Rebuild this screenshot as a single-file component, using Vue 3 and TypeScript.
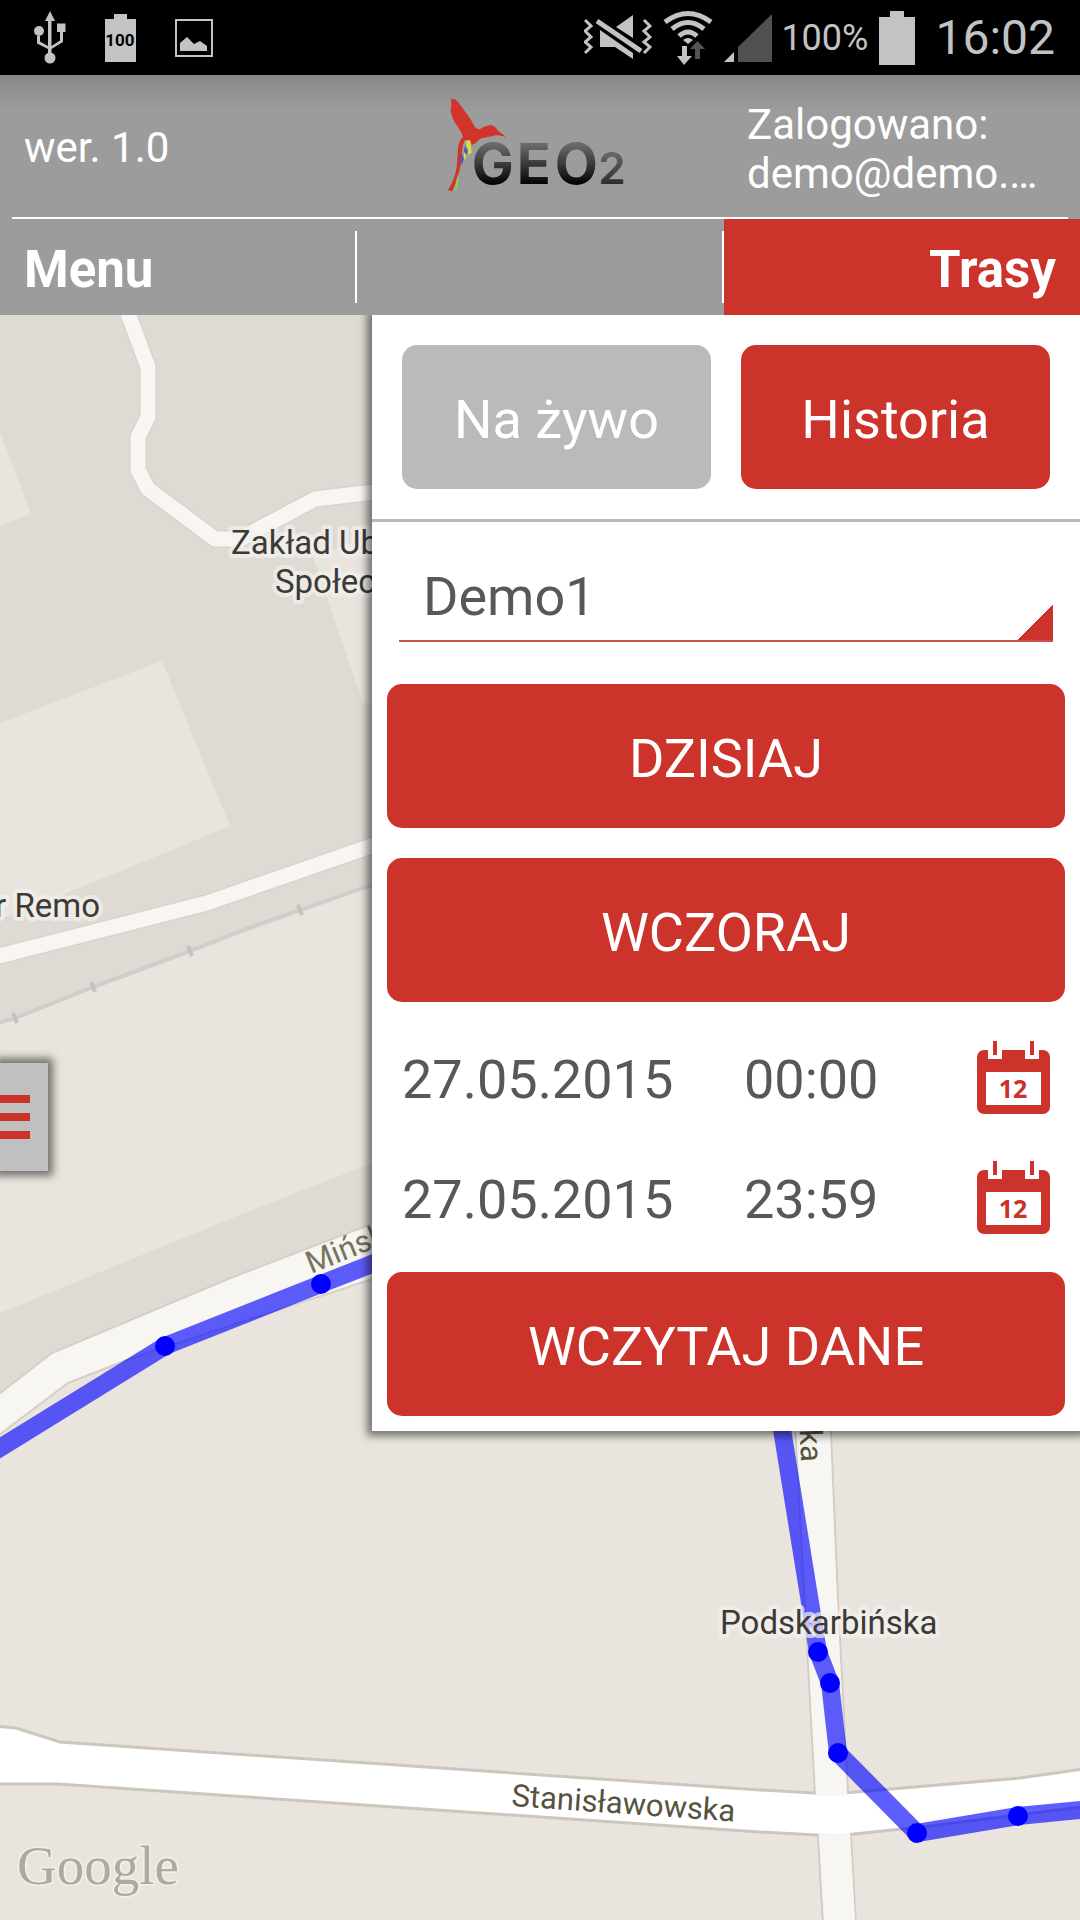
<script setup lang="ts">
import { ref } from 'vue'

interface Point { x: number; y: number }

const vehicle = ref('Demo1')
const ranges = ref([
  { id: 'from', label: 'Od', date: '27.05.2015', time: '00:00' },
  { id: 'to', label: 'Do', date: '27.05.2015', time: '23:59' },
])

const westTrack: Point[] = [{ x: -10, y: 1454 }, { x: 165, y: 1346 }, { x: 321, y: 1284 }, { x: 400, y: 1253 }]
const eastTrack: Point[] = [
  { x: 775, y: 1386 }, { x: 818, y: 1652 }, { x: 830, y: 1683 }, { x: 838, y: 1753 },
  { x: 917, y: 1833 }, { x: 1018, y: 1816 }, { x: 1090, y: 1809 },
]
const stops: Point[] = [...westTrack.slice(1, 3), ...eastTrack.slice(1, 6)]
const railTicks: Point[] = [{ x: 15, y: 1018 }, { x: 93, y: 987 }, { x: 190, y: 951 }, { x: 300, y: 910 }]
const toPoints = (track: Point[]) => track.map((p) => `${p.x},${p.y}`).join(' ')
</script>

<template>
  <div class="screen">
    <div class="status">
      <div class="status-left">
        <svg width="32" height="54" viewBox="34 10 32 54" fill="#c3c3c3" aria-hidden="true">
          <path d="M50 10 L55 20 H51.5 V45 L60 39.500 V31 H57 V22.500 H65.500 V31 H63 V41 L51.500 48 V53 H48 V48 L37 42.500 V35 H40 V40.500 L48 45 V20 H45 Z" />
          <circle cx="39" cy="30" r="5" /><circle cx="50" cy="57" r="5.500" />
        </svg>
        <svg width="31" height="48" viewBox="0 0 31 48" aria-hidden="true">
          <path d="M9 0 H22 V5 H31 V48 H0 V5 H9 Z" fill="#c3c3c3" />
          <text class="batt-text" x="15" y="32" text-anchor="middle">100</text>
        </svg>
        <svg width="38" height="38" viewBox="0 0 38 38" aria-hidden="true">
          <rect x="1" y="1" width="36" height="36" fill="none" stroke="#c3c3c3" stroke-width="2" />
          <path d="M5 32 V24 L12 18 L19 25 L25 22 L32 27 V32 Z" fill="#c3c3c3" />
        </svg>
      </div>
      <div class="status-right">
        <svg width="68" height="50" viewBox="583 12 68 50" aria-hidden="true">
          <path d="M615 26 L632 14 V37 Z M599 29 L632 52 V58 L614 46 H599 Z" fill="#c3c3c3" />
          <path d="M596 20 L640 50" stroke="#000" stroke-width="9" />
          <path d="M596 20 L640 50" stroke="#c3c3c3" stroke-width="5" />
          <path d="M584 19 L590 25 L584 30 L590 36 L584 41 L590 46 L584 52 M643 19 L649 25 L643 30 L649 36 L643 41 L649 46 L643 52" fill="none" stroke="#c3c3c3" stroke-width="3" />
        </svg>
        <svg width="50" height="56" viewBox="661 8 50 56" aria-hidden="true">
          <g fill="none" stroke="#c3c3c3" stroke-width="5">
            <path d="M663 20 Q686 3 709 20" /><path d="M670 27 Q686 14 702 27" /><path d="M677 34 Q686 26 695 34" />
          </g>
          <path d="M681 38 Q686 34 691 38 L686 42 Z M680 44 H685 V54 H690 L682 63 L675 54 H680 Z" fill="#c3c3c3" />
          <path d="M693 57 V47 H688 L695.500 39 L703 47 H698 V57 Z" fill="#555" />
        </svg>
        <svg width="48" height="48" viewBox="0 0 48 48" aria-hidden="true">
          <path d="M0 48 L10 38 V48 Z" fill="#c3c3c3" /><path d="M14 48 V33 L48 0 V48 Z" fill="#505050" />
        </svg>
        <span class="percent">100%</span>
        <svg width="36" height="54" viewBox="0 0 36 54" aria-hidden="true">
          <path d="M11 0 H25 V6 H36 V54 H0 V6 H11 Z" fill="#c3c3c3" />
        </svg>
        <span class="clock">16:02</span>
      </div>
    </div>

    <header class="header">
      <div class="brand">
        <span class="version">wer. 1.0</span>
        <svg class="logo" width="220" height="130" viewBox="0 0 660 390" role="img" aria-label="GEO2">
          <defs>
            <linearGradient id="ink" gradientUnits="userSpaceOnUse" x1="0" y1="190" x2="0" y2="312">
              <stop offset="0" stop-color="#6a6a6a" /><stop offset="0.500" stop-color="#383838" /><stop offset="1" stop-color="#000" />
            </linearGradient>
            <linearGradient id="ink-light" gradientUnits="userSpaceOnUse" x1="0" y1="215" x2="0" y2="312">
              <stop offset="0" stop-color="#686868" /><stop offset="1" stop-color="#2c2c2c" />
            </linearGradient>
          </defs>
          <path d="M63 55 Q72 50 84 63 L108 95 Q124 116 130 130 Q138 147 150 144 Q162 135 182 132 Q197 136 204 149 L228 167 Q210 164 199 162 Q172 170 154 171 L146 178 Q137 190 126 192 Q117 173 104 178 Q94 200 96 232 Q88 275 78 307 L66 331 L54 328 Q75 293 80 258 Q83 218 84 202 Q86 180 99 168 Q94 150 83 137 Q64 112 62 88 Q66 72 63 55 Z" fill="#d0342b" />
          <path d="M108 180 L121 178 L125 215 L114 221 Z M103 216 L109 224 L105 237 L100 231 Z" fill="#d9dd3c" />
          <path d="M104 194 L114 207 L111 221 L102 211 Z M95 218 L102 232 L96 252 L91 240 Z" fill="#4a5bc4" />
          <path d="M84 278 L85 303 L80 326 L72 326 Z" fill="#8fd04e" />
          <g class="wordmark">
            <text x="125 260 374" y="309" fill="url(#ink)">GEO</text>
            <text class="two" x="505" y="310" fill="url(#ink-light)">2</text>
          </g>
        </svg>
        <p class="account">Zalogowano:<br>demo@demo.…</p>
      </div>
      <div class="divider"></div>
      <nav class="tabs">
        <button type="button" class="tab">Menu</button>
        <span class="rule"></span>
        <span></span>
        <span class="rule"></span>
        <button type="button" class="tab active">Trasy</button>
      </nav>
    </header>

    <main class="stage">
      <svg class="map" viewBox="0 315 1080 1605" preserveAspectRatio="xMinYMin slice" aria-label="Mapa">
        <rect x="0" y="315" width="1080" height="1605" fill="#dfdbd4" />
        <g fill="#e9e5de">
          <path d="M0 432 L31 514 L0 525 Z" />
          <path d="M0 723 L162 661 L230 826 L67 893 L0 919 Z" />
          <path d="M313 557 L400 525 V700 L363 703 Z" />
          <path d="M0 1022 L93 989 L190 953 L300 912 L400 876 V1152 L242 1214 L0 1313 Z" />
          <path d="M0 1430 L68 1383 L400 1265 H1080 V1920 H0 Z" />
        </g>
        <g fill="none" stroke-linejoin="round">
          <path d="M123 300 L148 367 V417 L138 437 V470 L148 489 L215 539 H240 L315 499 L400 489 M-5 957 L207 903 L400 836" stroke="#d8d4cc" stroke-width="18" />
          <path d="M123 300 L148 367 V417 L138 437 V470 L148 489 L215 539 H240 L315 499 L400 489 M-5 957 L207 903 L400 836" stroke="#f8f6f2" stroke-width="15" />
          <path d="M-5 1024 L15 1018 L93 987 L190 951 L240 931 L300 910 L400 875" stroke="#d0ceca" stroke-width="4" />
        </g>
        <path v-for="t in railTicks" :key="t.x" :d="`M${t.x - 2} ${t.y - 5} L${t.x + 2} ${t.y + 5}`" stroke="#c4c2be" stroke-width="4" />
        <path d="M-5 1397 L52 1353 L228 1279 L400 1213 V1270 L132 1358 L68 1383 L-5 1438 Z" fill="#f8f6f2" stroke="#d5d0c6" stroke-width="2" />
        <path d="M-5 1726 L16 1728 L60 1742 L760 1790 L832 1794 L1020 1778 L1090 1768 V1806 L930 1826 L835 1836 L760 1832 L58 1784 H-5 Z" fill="#fff" stroke="#ccc6bb" stroke-width="3" />
        <path d="M793 1386 L815 1793 M829 1386 L838 1600 L848 1793 M818 1837 L823 1925 M851 1837 L856 1925" fill="none" stroke="#d2cdc2" stroke-width="2" />
        <path d="M794 1386 H828 L837 1600 L847 1795 L850 1834 L855 1920 H824 L819 1837 L816 1795 Z" fill="#f8f6f2" />
        <path d="M800 1796 L832 1796 L865 1793 V1831 L835 1834 L800 1832 Z" fill="#fff" />

        <g fill="none" stroke="#00f" stroke-width="18" stroke-opacity="0.630">
          <polyline :points="toPoints(westTrack)" />
          <polyline :points="toPoints(eastTrack)" />
        </g>
        <g class="place">
          <text x="231" y="554">Zakład Ub</text>
          <text x="275" y="593">Społec</text>
          <text x="100" y="917" text-anchor="end">r Remo</text>
          <text x="720" y="1634">Podskarbińska</text>
        </g>
        <g class="street">
          <text transform="translate(311 1274) rotate(-22)" fill="#77735f">Mińska</text>
          <text transform="translate(511 1806) rotate(4)">Stanisławowska</text>
          <text transform="translate(801 1462) rotate(88)" text-anchor="end">ka</text>
        </g>
        <circle v-for="s in stops" :key="`${s.x}-${s.y}`" :cx="s.x" :cy="s.y" r="10" fill="#00f" />
        <text class="provider" x="17" y="1884">Google</text>
      </svg>

      <button type="button" class="drawer" aria-label="Otwórz listę"><i></i><i></i><i></i></button>

      <form class="panel" @submit.prevent>
        <div class="modes">
          <button type="button" class="btn muted">Na żywo</button>
          <button type="button" class="btn">Historia</button>
        </div>
        <select v-model="vehicle" class="vehicle" aria-label="Pojazd">
          <option>Demo1</option>
        </select>
        <div class="presets">
          <button type="button" class="btn">DZISIAJ</button>
          <button type="button" class="btn">WCZORAJ</button>
        </div>
        <div class="ranges">
          <div v-for="r in ranges" :key="r.id" class="range">
            <input v-model="r.date" type="text" :aria-label="`${r.label} – data`">
            <input v-model="r.time" type="text" :aria-label="`${r.label} – godzina`">
            <button type="button" class="calendar" :aria-label="`${r.label} – kalendarz`">
              <svg width="73" height="73" viewBox="0 0 73 73">
                <rect y="9" width="73" height="64" rx="7" fill="#cb332b" />
                <path d="M11 8 H25 V18 H11 Z M48 8 H62 V18 H48 Z M9 31 H64 V64 H9 Z" fill="#fff" />
                <path d="M16 0 H20 V14 H16 Z M53 0 H57 V14 H53 Z" fill="#cb332b" />
                <text x="36" y="57" text-anchor="middle">12</text>
              </svg>
            </button>
          </div>
        </div>
        <button type="submit" class="btn">WCZYTAJ DANE</button>
      </form>
    </main>
  </div>
</template>

<style>
body {
  margin: 0;
}
</style>

<style scoped>
.screen {
  display: flex;
  flex-direction: column;
  min-height: 100vh;
  overflow: hidden;
  font-family: Roboto, "Noto Sans", sans-serif;
  color: #fff;
}
button, input, select {
  margin: 0;
  padding: 0;
  border: 0;
  border-radius: 0;
  background: none;
  color: inherit;
  font: inherit;
}
svg {
  display: block;
  flex: none;
}

.status {
  display: flex;
  justify-content: space-between;
  align-items: center;
  height: 75px;
  padding: 0 25px 0 34px;
  box-sizing: border-box;
  background: #000;
  color: #c3c3c3;
}
.status-left, .status-right {
  display: flex;
  align-items: center;
}
.status-left {
  gap: 39px;
}
.status-right {
  gap: 11px;
}
.batt-text {
  font-size: 17px;
  font-weight: 700;
  fill: #000;
}
.percent {
  margin-left: -2px;
  font-size: 36px;
}
.clock {
  margin-left: 9px;
  font-size: 48px;
}

.header {
  position: relative;
  z-index: 2;
  background: linear-gradient(#888, #9c9c9c 36px);
}
.brand {
  display: grid;
  grid-template-columns: 430fr 317fr 333fr;
  align-items: center;
  height: 142px;
  font-size: 42px;
}
.version {
  padding: 2px 0 0 24px;
}
.account {
  margin: 0;
  padding-top: 6px;
  line-height: 49px;
  white-space: nowrap;
}
.wordmark {
  font-family: Inter, sans-serif;
  font-size: 168px;
  font-weight: 700;
}
.two {
  font-size: 132px;
  font-weight: 600;
}
.divider {
  height: 2px;
  margin: 0 12px;
  background: #fff;
}
.tabs {
  display: grid;
  grid-template-columns: 355fr 2px 365fr 2px 356fr;
  height: 96px;
}
.tab {
  padding: 4px 24px 0;
  font-size: 51px;
  font-weight: 700;
  text-align: left;
}
.tab.active {
  background: #cb332b;
  text-align: right;
}
.rule {
  margin: 12px 0;
  background: #fff;
}

.stage {
  position: relative;
  flex: 1;
  display: grid;
  grid-template-columns: 372fr 708fr;
  align-items: start;
}
.map {
  position: absolute;
  inset: 0;
  width: 100%;
  height: 100%;
}
.place {
  font-size: 33px;
  fill: #3c3a37;
  stroke: #f4f2ee;
  stroke-opacity: 0.7;
  stroke-width: 8px;
  stroke-linejoin: round;
  paint-order: stroke;
}
.street {
  font-size: 31px;
  fill: #56523f;
}
.provider {
  font-family: "Liberation Serif", serif;
  font-size: 55px;
  fill: #aeaaa3;
  stroke: #f3f0eb;
  stroke-width: 3px;
  paint-order: stroke;
}
.drawer {
  position: relative;
  display: flex;
  flex-direction: column;
  justify-content: center;
  gap: 10px;
  width: 48px;
  height: 108px;
  margin-top: 748px;
  background: #c0c0c0;
  box-shadow: 0 0 8px 5px rgba(0, 0, 0, 0.5);
}
.drawer i {
  width: 30px;
  height: 8px;
  background: #cb332b;
}

.panel {
  position: relative;
  display: flex;
  flex-direction: column;
  padding-bottom: 15px;
  background: #fff;
  box-shadow: 0 0 8px 5px rgba(0, 0, 0, 0.5);
  color: #585858;
  font-size: 54px;
}
.btn {
  height: 144px;
  padding-top: 4px;
  border-radius: 15px;
  background: #cb332b;
  color: #fff;
}
.panel > .btn {
  margin: 0 15px;
}
.btn.muted {
  background: #bababa;
}
.modes {
  display: grid;
  grid-template-columns: 1fr 1fr;
  gap: 30px;
  padding: 30px;
  border-bottom: 3px solid #bababa;
}
.vehicle {
  appearance: none;
  height: 90px;
  margin: 30px 27px 42px;
  padding-left: 24px;
  border-bottom: 2px solid #cf5049;
  background: linear-gradient(135deg, transparent 50%, #cb332b 50%) no-repeat right bottom / 36px 36px;
}
.presets {
  display: flex;
  flex-direction: column;
  gap: 30px;
  padding: 0 15px;
}
.ranges {
  padding: 15px 30px;
}
.range {
  display: grid;
  grid-template-columns: 342fr 233fr 73px;
  align-items: center;
  height: 120px;
}
.range input {
  box-sizing: border-box;
  min-width: 0;
  width: 100%;
  padding-top: 4px;
}
.calendar {
  width: 73px;
  height: 73px;
}
.calendar text {
  font-family: "Open Sans", sans-serif;
  font-size: 25px;
  font-weight: 700;
  fill: #cb332b;
}
</style>
